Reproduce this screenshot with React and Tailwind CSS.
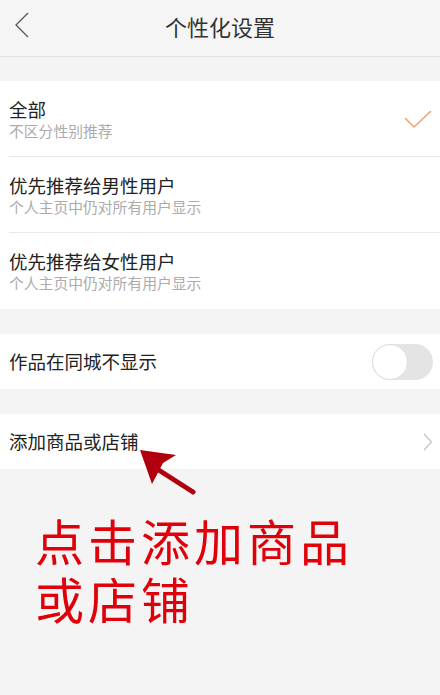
import React from "react";

const font = { fontFamily: '"Noto Sans CJK SC", "Noto Sans", sans-serif' };

const Check = () => (
  <svg width="30" height="20" viewBox="0 0 30 20" fill="none">
    <path d="M2 9 L11 18 L28 2" stroke="#f0a070" strokeWidth="1.6" />
  </svg>
);

const Option = ({ title, sub, checked, last }) => (
  <div className="flex items-center h-[76px] pl-[9px]">
    <div
      className={`flex-1 h-full flex items-center pr-[7px] ${last ? "" : "border-b border-[#e9e9e9]"}`}
    >
      <div className="flex-1 flex flex-col">
        <span className="text-[18.5px] leading-[24px] text-[#222]">{title}</span>
        <span className="text-[14.8px] leading-[20px] text-[#ababab]">{sub}</span>
      </div>
      {checked && <Check />}
    </div>
  </div>
);

export default function App() {
  return (
    <div className="w-[440px] h-[695px] bg-[#f4f4f4] overflow-hidden relative" style={font}>
      <div className="h-[57px] flex items-center relative border-b border-[#e2e2e2] bg-[#f5f5f5]">
        <svg className="absolute left-[14px] top-[12px]" width="16" height="26" viewBox="0 0 16 26" fill="none">
          <path d="M14 1 L2 13 L14 25" stroke="#555" strokeWidth="1.3" />
        </svg>
        <div className="flex-1 text-center text-[22px] leading-[30px] text-[#333] pb-[5px]">个性化设置</div>
      </div>

      <div className="mt-[24px] bg-white">
        <Option title="全部" sub="不区分性别推荐" checked />
        <Option title="优先推荐给男性用户" sub="个人主页中仍对所有用户显示" />
        <Option title="优先推荐给女性用户" sub="个人主页中仍对所有用户显示" last />
      </div>

      <div className="mt-[25px] bg-white h-[55px] flex items-center pl-[9px] pr-[7px]">
        <span className="flex-1 text-[18.5px] text-[#222]">作品在同城不显示</span>
        <div className="w-[61px] h-[36px] rounded-full bg-[#e4e4e4] flex items-center">
          <div className="w-[36px] h-[36px] rounded-full bg-white border border-[#dcdcdc]" />
        </div>
      </div>

      <div className="mt-[25px] bg-white h-[55px] flex items-center pl-[9px] pr-[7px]">
        <span className="flex-1 text-[18.5px] text-[#222]">添加商品或店铺</span>
        <svg width="10" height="18" viewBox="0 0 10 18" fill="none">
          <path d="M1 1 L8.5 9 L1 17" stroke="#c4c4c4" strokeWidth="1.2" />
        </svg>
      </div>

      <p className="mt-[42px] ml-[35px] w-[335px] text-[49px] leading-[58px] tracking-[4px] text-[#e0000a]">
        点击添加商品或店铺
      </p>

      <svg className="absolute left-[130px] top-[440px]" width="75" height="60" viewBox="130 440 75 60">
        <path d="M154 467 L193 492" stroke="#b0000e" strokeWidth="5" strokeLinecap="round" />
        <path d="M140 450 L176 455 L163 463 L152 484 Z" fill="#b0000e" />
      </svg>
    </div>
  );
}
